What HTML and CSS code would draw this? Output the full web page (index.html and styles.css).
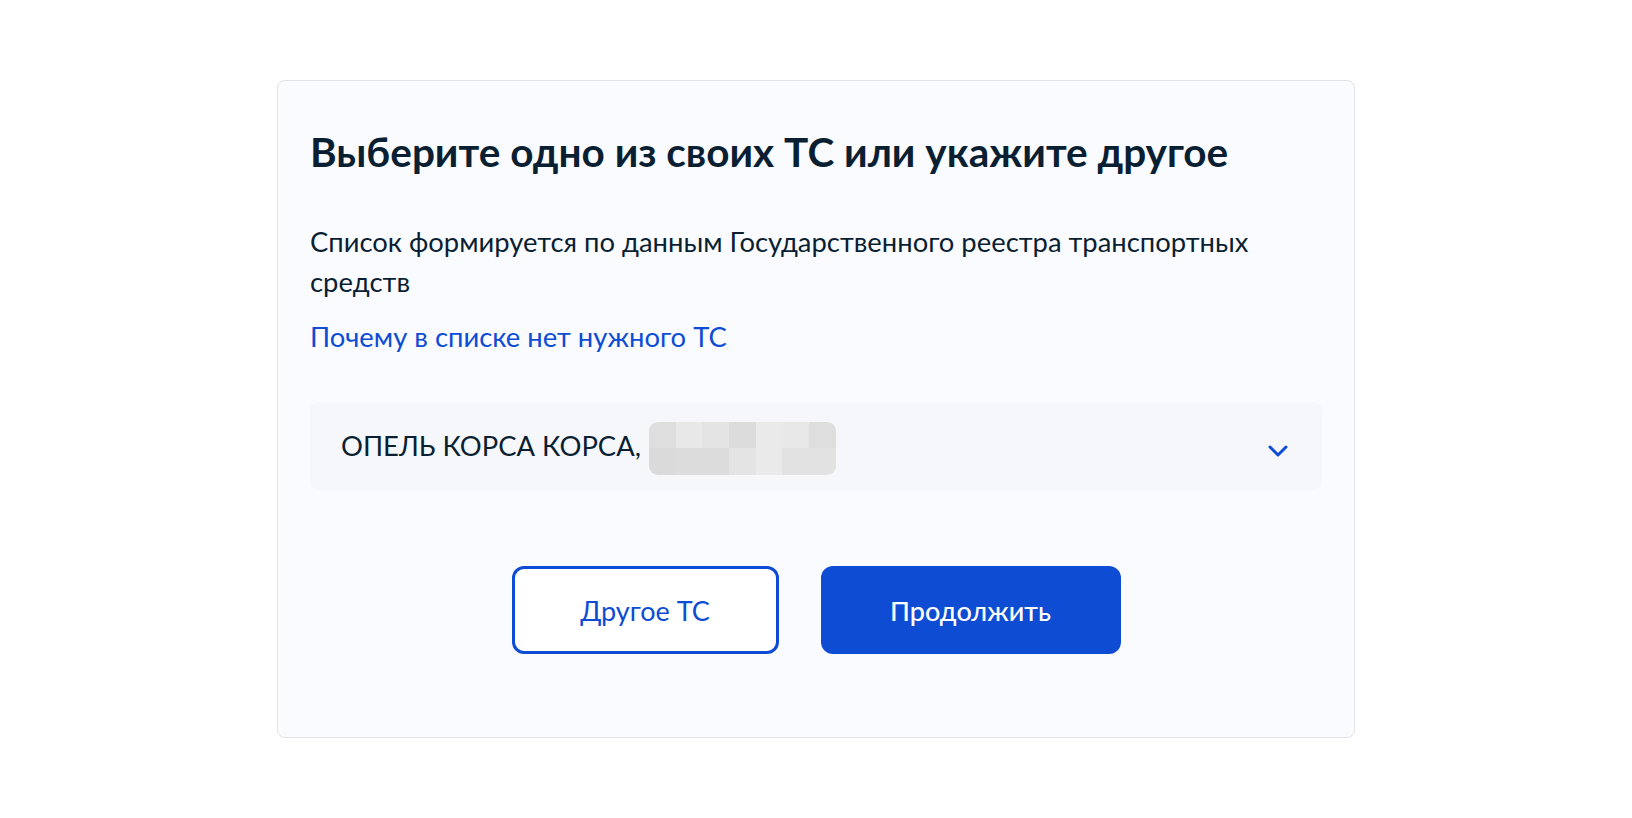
FILE: index.html
```html
<!DOCTYPE html>
<html lang="ru">
<head>
<meta charset="utf-8">
<title>Выбор ТС</title>
<link rel="stylesheet" href="styles.css">
</head>
<body>
<main class="page">
  <section class="card">
    <h1 class="title">Выберите одно из своих ТС или укажите другое</h1>
    <p class="lead">Список формируется по данным Государственного реестра транспортных средств</p>
    <a class="link" href="#">Почему в списке нет нужного ТС</a>
    <div class="select">
      <div class="select-value">
        <span class="select-text">ОПЕЛЬ КОРСА КОРСА,</span>
        <span class="blur">
          <i class="px s2"></i><i class="px s5"></i><i class="px s4"></i><i class="px s1"></i><i class="px s6"></i><i class="px s5"></i><i class="px s2"></i>
          <i class="px s0"></i><i class="px s1"></i><i class="px s1"></i><i class="px s4"></i><i class="px s6"></i><i class="px s3"></i><i class="px s3"></i>
        </span>
      </div>
      <svg class="chevron" width="20" height="12" viewBox="0 0 20 12" aria-hidden="true">
        <path d="M2 2 L10 10 L18 2" fill="none" stroke="#0d4cd3" stroke-width="3" stroke-linecap="round" stroke-linejoin="round"/>
      </svg>
    </div>
    <div class="actions">
      <button class="btn btn-outline" type="button">Другое ТС</button>
      <button class="btn btn-primary" type="button">Продолжить</button>
    </div>
  </section>
</main>
</body>
</html>
```

FILE: styles.css
```css
* { box-sizing: border-box; }
html, body {
  margin: 0;
  padding: 0;
  background: #ffffff;
  font-family: Lato, "Noto Sans", sans-serif;
  color: #0b1f33;
}
.page {
  display: flex;
  justify-content: center;
  padding-top: 80px;
}
.card {
  width: 1078px;
  height: 658px;
  background: #f9fbfe;
  border: 1px solid #dfe2e7;
  border-radius: 8px;
  padding: 42px 32px 0 32px;
  display: flex;
  flex-direction: column;
  align-items: flex-start;
}
.title {
  margin: 0;
  font-size: 40.5px;
  line-height: 58px;
  font-weight: 700;
  color: #0b1f33;
}
.lead {
  margin: 41px 0 0 0;
  font-size: 27.4px;
  line-height: 40px;
  color: #0b1f33;
}
.link {
  margin-top: 15px;
  font-size: 27.4px;
  line-height: 40px;
  color: #0d4cd3;
  text-decoration: none;
}
.select {
  margin-top: 45px;
  width: 100%;
  height: 88px;
  background: #f5f7fa;
  border-radius: 8px;
  padding: 0 34px 0 31px;
  display: flex;
  align-items: center;
  justify-content: space-between;
}
.select-value {
  display: flex;
  align-items: center;
  gap: 8px;
}
.select-text {
  font-size: 27.4px;
  line-height: 40px;
  color: #0b1f33;
}
.blur {
  display: grid;
  grid-template-columns: repeat(7, 1fr);
  grid-template-rows: 26px 27px;
  width: 187px;
  height: 53px;
  border-radius: 9px;
  overflow: hidden;
  margin-top: 4px;
}
.px { display: block; }
.s0 { background: #dadada; }
.s1 { background: #dcdcdc; }
.s2 { background: #dedede; }
.s3 { background: #e2e2e2; }
.s4 { background: #e4e4e4; }
.s5 { background: #e8e8e8; }
.s6 { background: #eaeaea; }
.chevron {
  display: block;
  margin-top: 10px;
}
.actions {
  margin-top: 76px;
  width: 100%;
  display: flex;
  justify-content: center;
  gap: 42px;
}
.btn {
  height: 88px;
  border-radius: 12px;
  font-family: Lato, "Noto Sans", sans-serif;
  font-size: 27px;
  font-weight: 400;
  cursor: pointer;
}
.btn-outline {
  width: 267px;
  background: #ffffff;
  color: #0d4cd3;
  border: 3px solid #0d4cd3;
}
.btn-primary {
  width: 300px;
  background: #0d4cd3;
  color: #ffffff;
  border: none;
  font-weight: 500;
}
```
